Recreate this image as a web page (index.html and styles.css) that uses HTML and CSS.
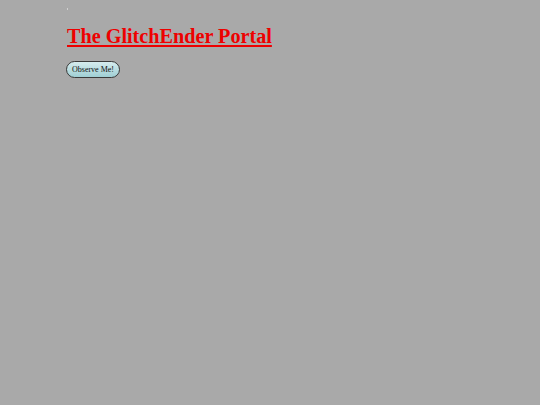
FILE: index.html
```html
<!DOCTYPE html>
<html>
<head>
<meta charset="utf-8">
<link rel="stylesheet" href="styles.css">
</head>
<body>
<div class="page">
  <span class="mark"></span>
  <h1 class="title"><a href="#" class="title-link">The GlitchEnder Portal</a></h1>
  <button class="observe">Observe Me!</button>
</div>
</body>
</html>
```
FILE: styles.css
```css
html, body {
  margin: 0;
  padding: 0;
  background: #a9a9a9;
  font-family: "Liberation Serif", "Times New Roman", serif;
}
.page {
  padding: 8px 67px;
}
.mark {
  display: block;
  width: 1px;
  height: 2px;
  background: #d0d0d0;
}
.title {
  margin: 14px 0 13px;
  font-size: 20.2px;
  font-weight: bold;
  line-height: 24px;
}
.title-link {
  color: #ee0000;
  text-decoration: underline;
}
.observe {
  display: block;
  margin-left: -1px;
  height: 17px;
  padding: 0 5px;
  font-family: "Liberation Serif", serif;
  font-size: 8px;
  font-weight: normal;
  color: #111;
  border: 1px solid #3a3a3a;
  border-radius: 9px;
  background: linear-gradient(#d6ecee, #9fcfd4);
}
```
